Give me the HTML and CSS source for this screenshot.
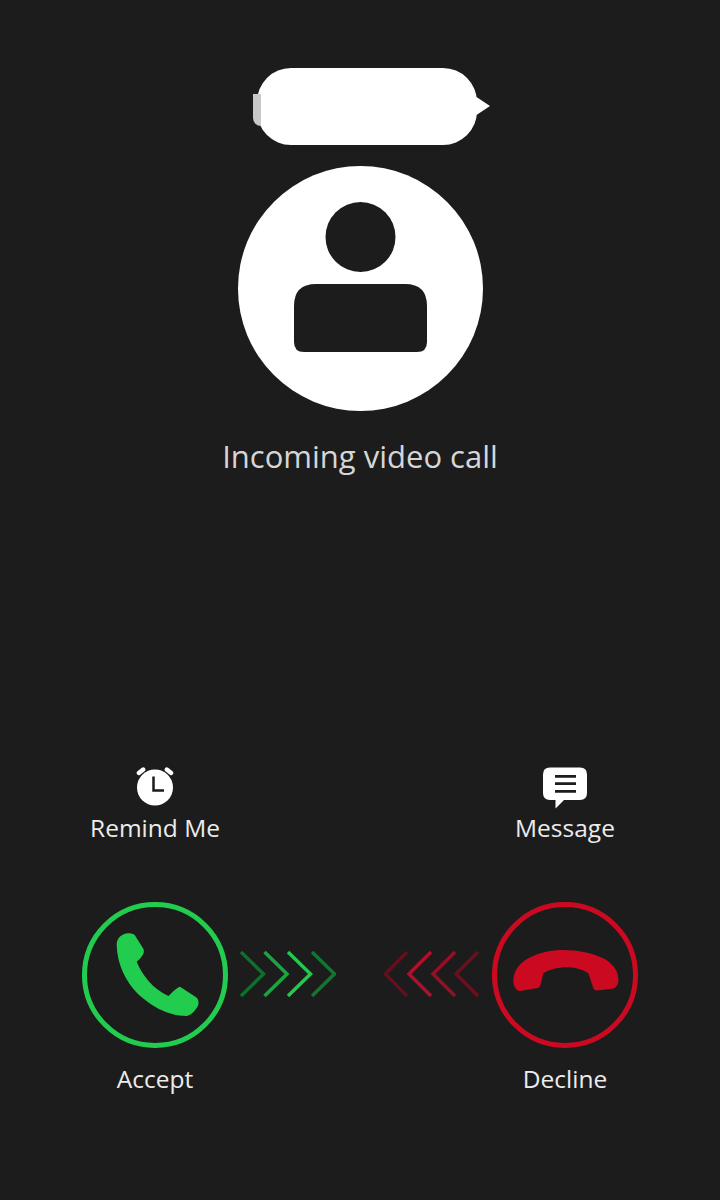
FILE: index.html
```html
<!DOCTYPE html>
<html lang="en">
<head>
    <meta charset="UTF-8">
    <meta name="viewport" content="width=device-width, initial-scale=1.0">
    <title>Incoming video call</title>
    <link rel="stylesheet" href="styles.css">
</head>
<body>
    <div class="caller">
        <div class="name-bubble"></div>
        <svg class="avatar" viewBox="0 0 245 245">
            <circle cx="122.5" cy="122.5" r="122.5" fill="#fff"/>
            <circle cx="122.5" cy="71" r="35" fill="#1c1c1c"/>
            <path d="M78 118H167Q189 118 189 140V176Q189 186 179 186H66Q56 186 56 176V140Q56 118 78 118Z" fill="#1c1c1c"/>
        </svg>
        <div class="status">Incoming video call</div>
    </div>

    <div class="actions">
        <div class="options">
            <div class="option">
                <svg class="option-icon" viewBox="0 0 44 44">
                    <rect x="3" y="4.500" width="10" height="4.500" rx="2.200" fill="#fff" transform="rotate(-38 8 6.700)"/>
                    <rect x="31" y="4.500" width="10" height="4.500" rx="2.200" fill="#fff" transform="rotate(38 36 6.700)"/>
                    <circle cx="22" cy="23" r="18" fill="#fff"/>
                    <path d="M20.500 12V26H31" fill="none" stroke="#1c1c1c" stroke-width="2.500"/>
                </svg>
                <span class="label">Remind Me</span>
            </div>
            <div class="option">
                <svg class="option-icon" viewBox="0 0 44 45">
                    <path d="M7 3.500H37Q44 3.500 44 10.500V29Q44 36 37 36H21L12.500 44.500V36H7Q0 36 0 29V10.500Q0 3.500 7 3.500Z" fill="#fff"/>
                    <path d="M12 12.300H33M12 19.700H33M12 27.300H33" stroke="#1c1c1c" stroke-width="2.800"/>
                </svg>
                <span class="label">Message</span>
            </div>
        </div>

        <div class="calls">
            <div class="call-side">
                <div class="call">
                    <svg class="call-btn" viewBox="0 0 146 146">
                        <circle cx="73" cy="73" r="70.500" fill="none" stroke="#22cc4f" stroke-width="5"/>
                        <path d="M34.700 43C34.500 36 40 31.500 46.300 31.300C49.500 31 52 32 53 33.500L61.500 47C62.500 50 61.500 52 60 54C58.500 56.500 56.500 58 54.700 59.700C60 73 71 87 86.300 94C89 92 93 86.500 98 84.700L114.500 95.500C116.500 97 116.800 100 116.300 103C113.500 109 109 113 104.700 114C85 114 68 103 56 92C44 80 35 62 34.700 43Z" fill="#22cc4f"/>
                    </svg>
                    <span class="label">Accept</span>
                </div>
                <svg class="chevrons" viewBox="0 0 96 46" fill="none" stroke-width="3.500">
                    <path d="M1 1L23.500 23L1 45" stroke="#0f6f2d"/>
                    <path d="M24.500 1L47 23L24.500 45" stroke="#18a640"/>
                    <path d="M48 1L70.500 23L48 45" stroke="#22c94e"/>
                    <path d="M72 1L94.500 23L72 45" stroke="#107630"/>
                </svg>
            </div>
            <div class="call-side">
                <svg class="chevrons" viewBox="0 0 96 46" fill="none" stroke-width="3.500">
                    <path d="M23 1L1.500 23L23 45" stroke="#640f1e"/>
                    <path d="M47 1L25 23L47 45" stroke="#b0102b"/>
                    <path d="M71 1L49 23L71 45" stroke="#950f25"/>
                    <path d="M94 1L72 23L94 45" stroke="#681020"/>
                </svg>
                <div class="call">
                    <svg class="call-btn" viewBox="0 0 146 146">
                        <circle cx="73" cy="73" r="70.500" fill="none" stroke="#cb0a22" stroke-width="5"/>
                        <path d="M21.300 78C22 68 28 61 36.300 56.300C48 50 60 48 71.300 48C86 48 100 51 111.300 56.300C120 61 126 68 126.300 76.300C126.800 80 126 84 122 86.500L105 88.500C102.500 88.500 101.500 87 101 85L96.300 71.300C90 67 82 65.300 74.700 65.300C66 65.300 57 67.500 51.300 71.300L48.500 83C48 85 46 86 44 86.300L28 89C24 89 21 83 21.300 78Z" fill="#cb0a22"/>
                    </svg>
                    <span class="label">Decline</span>
                </div>
            </div>
        </div>
    </div>
</body>
</html>
```

FILE: styles.css
```css
body {
    margin: 0;
    height: 1200px;
    overflow: hidden;
    background: #1c1c1c;
    color: #ececec;
    font-family: "Open Sans", sans-serif;
}
.caller {
    display: flex;
    flex-direction: column;
    align-items: center;
    padding-top: 68px;
}
.name-bubble {
    position: relative;
    width: 220px;
    height: 77px;
    margin-left: 14px;
    background: #fff;
    border-radius: 34px;
}
/* tail on the right */
.name-bubble::after {
    content: "";
    position: absolute;
    left: 218px;
    top: 28px;
    border-left: 15px solid #fff;
    border-top: 10px solid transparent;
    border-bottom: 10px solid transparent;
}
/* bit of the name still showing on the left */
.name-bubble::before {
    content: "";
    position: absolute;
    left: -4px;
    top: 26px;
    width: 8px;
    height: 32px;
    background: #c8c8c8;
    border-radius: 0 0 0 8px;
}
.avatar {
    display: block;
    width: 245px;
    height: 245px;
    margin-top: 21px;
}
.status {
    margin-top: 24px;
    font-size: 31px;
    line-height: 42px;
    color: #d6d6d6;
}
.actions {
    margin-top: 287px;
    padding: 0 82px;
}
.options,
.calls {
    display: flex;
    justify-content: space-between;
}
.option,
.call {
    display: flex;
    flex-direction: column;
    align-items: center;
    width: 146px;
}
.option-icon {
    display: block;
    width: 44px;
    height: 45px;
}
.label {
    font-size: 24.5px;
    line-height: 32px;
    white-space: nowrap;
}
.option .label {
    margin-top: 3px;
}
.calls {
    margin-top: 58px;
}
.call-side {
    display: flex;
    align-items: flex-start;
    gap: 12px;
}
.call-btn {
    display: block;
    width: 146px;
    height: 146px;
}
.call .label {
    margin-top: 15px;
}
.chevrons {
    display: block;
    width: 96px;
    height: 46px;
    margin-top: 49px;
}
```
